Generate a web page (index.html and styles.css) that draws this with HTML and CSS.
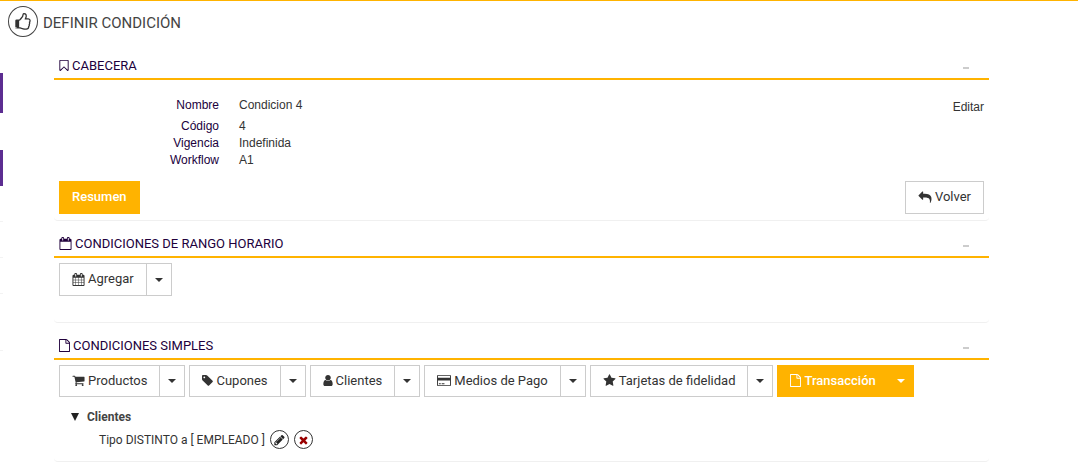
FILE: index.html
```html
<!DOCTYPE html>
<html lang="es">
<head>
<meta charset="utf-8">
<meta name="viewport" content="width=device-width, initial-scale=1">
<title>Definir condición</title>
<link rel="stylesheet" href="styles.css">
</head>
<body>
<svg class="sprite" aria-hidden="true">
  <symbol id="thumb" viewBox="0 0 1792 1792"><path d="M256 1472q0-26-19-45t-45-19-45 19-19 45 19 45 45 19 45-19 19-45zm1280-704q0-51-39-89.500t-89-38.500h-352q0-58 48-159.500t48-160.500q0-98-32-145t-128-47q-26 26-38 85t-30.500 125.500-59.500 109.500q-22 23-77 91-4 5-23 30t-31.500 41-34.500 42.500-40 44-38.500 35.500-40 27-35.500 9h-32v640h32q13 0 31.500 3t33 6.500 38 11 35 11.500 35.500 12.500 29 10.500q211 73 342 73h121q192 0 192-167 0-26-5-56 30-16 47.500-52.500t17.500-73.500-18-69q53-50 53-119 0-25-10-55.500t-25-47.500q32-1 53.500-47t21.500-81zm128-1q0 89-49 163 9 33 9 69 0 77-38 144 3 21 3 43 0 101-60 178 1 139-85 219.500t-227 80.500h-129q-96 0-189.500-22.500t-216.500-65.500q-116-40-138-40h-288q-53 0-90.500-37.500t-37.500-90.500v-640q0-53 37.500-90.500t90.500-37.500h274q36-24 137-155 58-75 107-128 24-25 35.500-85.500t30.500-126.500 62-108q39-37 90-37 84 0 151 32.500t102 101.500 35 186q0 93-48 192h176q104 0 180 76t76 179z"/></symbol>
  <symbol id="bookmark" viewBox="256 0 1280 1792"><path d="M1408 256h-1024v1242l423-406 89-85 89 85 423 406v-1242zm12-128q23 0 44 9 33 13 52.500 41t19.500 62v1289q0 34-19.500 62t-52.500 41q-19 8-44 8-48 0-83-32l-441-424-441 424q-36 33-83 33-23 0-44-9-33-13-52.500-41t-19.500-62v-1289q0-34 19.500-62t52.500-41q21-9 44-9h1048z"/></symbol>
  <symbol id="calendar-o" viewBox="64 0 1664 1792"><path d="M192 1664h1408v-1024h-1408v1024zm384-1216v-288q0-13-9.500-22.500t-22.500-9.500h-64q-13 0-22.500 9.500t-9.500 22.500v288q0 13 9.500 22.500t22.500 9.500h64q13 0 22.500-9.500t9.500-22.500zm768 0v-288q0-13-9.500-22.500t-22.500-9.500h-64q-13 0-22.500 9.500t-9.500 22.500v288q0 13 9.500 22.500t22.500 9.500h64q13 0 22.500-9.500t9.500-22.500zm384-64v1280q0 52-38 90t-90 38h-1408q-52 0-90-38t-38-90v-1280q0-52 38-90t90-38h128v-96q0-66 47-113t113-47h64q66 0 113 47t47 113v96h384v-96q0-66 47-113t113-47h64q66 0 113 47t47 113v96h128q52 0 90 38t38 90z"/></symbol>
  <symbol id="calendar" viewBox="64 0 1664 1792"><path d="M192 1664h288v-288h-288v288zm352 0h320v-288h-320v288zm-352-352h288v-320h-288v320zm352 0h320v-320h-320v320zm-352-384h288v-288h-288v288zm736 736h320v-288h-320v288zm-384-736h320v-288h-320v288zm768 736h288v-288h-288v288zm-384-352h320v-320h-320v320zm-352-864v-288q0-13-9.500-22.500t-22.500-9.500h-64q-13 0-22.500 9.500t-9.500 22.500v288q0 13 9.500 22.500t22.500 9.500h64q13 0 22.500-9.500t9.500-22.500zm736 864h288v-320h-288v320zm-384-384h320v-288h-320v288zm384 0h288v-288h-288v288zm32-480v-288q0-13-9.500-22.500t-22.500-9.500h-64q-13 0-22.500 9.500t-9.500 22.500v288q0 13 9.500 22.500t22.500 9.500h64q13 0 22.500-9.500t9.500-22.500zm384-64v1280q0 52-38 90t-90 38h-1408q-52 0-90-38t-38-90v-1280q0-52 38-90t90-38h128v-96q0-66 47-113t113-47h64q66 0 113 47t47 113v96h384v-96q0-66 47-113t113-47h64q66 0 113 47t47 113v96h128q52 0 90 38t38 90z"/></symbol>
  <symbol id="file" viewBox="128 0 1536 1792"><path d="M1596 380q28 28 48 76t20 88v1152q0 40-28 68t-68 28h-1344q-40 0-68-28t-28-68v-1600q0-40 28-68t68-28h896q40 0 88 20t76 48zm-444-244v376h376q-10-29-22-41l-313-313q-12-12-41-22zm384 1528v-1024h-416q-40 0-68-28t-28-68v-416h-768v1536h1280z"/></symbol>
  <symbol id="reply" viewBox="0 0 1792 1792"><path d="M1792 1120q0 166-127 451-3 7-10.500 24t-13.500 30-13 22q-12 17-28 17-15 0-23.500-10t-8.500-25q0-9 2.500-26.500t2.500-23.500q5-68 5-123 0-101-17.500-181t-48.500-138.500-80-101-105.500-69.500-133-42.500-154-21.500-175.500-6h-224v256q0 26-19 45t-45 19-45-19l-512-512q-19-19-19-45t19-45l512-512q19-19 45-19t45 19 19 45v256h224q713 0 875 403 53 134 53 333z"/></symbol>
  <symbol id="cart" viewBox="64 0 1664 1792"><path d="M704 1536q0 52-38 90t-90 38-90-38-38-90 38-90 90-38 90 38 38 90zm896 0q0 52-38 90t-90 38-90-38-38-90 38-90 90-38 90 38 38 90zm128-1088v512q0 24-16.500 42.500t-40.500 21.500l-1044 122q13 60 13 70 0 16-24 64h920q26 0 45 19t19 45-19 45-45 19h-1024q-26 0-45-19t-19-45q0-11 8-31.500t16-36 21.500-40 15.500-29.500l-177-823h-204q-26 0-45-19t-19-45 19-45 45-19h256q16 0 28.500 6.500t19.500 15.500 13 24.500 8 26 5.500 29.500 4.500 26h1201q26 0 45 19t19 45z"/></symbol>
  <symbol id="tag" viewBox="128 0 1536 1792"><path d="M576 448q0-53-37.500-90.500t-90.500-37.500-90.500 37.500-37.500 90.500 37.500 90.500 90.500 37.500 90.500-37.500 37.500-90.500zm1067 576q0 53-37 90l-491 492q-39 37-91 37-53 0-90-37l-715-716q-38-37-64.500-101t-26.500-117v-416q0-52 38-90t90-38h416q53 0 117 26.500t102 64.500l715 714q37 39 37 91z"/></symbol>
  <symbol id="user" viewBox="256 0 1280 1792"><path d="M1536 1399q0 109-62.500 187t-150.500 78h-854q-88 0-150.500-78t-62.500-187q0-85 8.500-160.500t31.500-152 58.500-131 94-89 134.500-34.500q131 128 313 128t313-128q76 0 134.500 34.500t94 89 58.500 131 31.500 152 8.500 160.500zm-256-887q0 159-112.500 271.500t-271.500 112.500-271.500-112.500-112.500-271.500 112.500-271.500 271.500-112.500 271.500 112.500 112.500 271.500z"/></symbol>
  <symbol id="card" viewBox="0 0 1920 1792"><path fill-rule="evenodd" d="M160 128h1600q66 0 113 47t47 113v1216q0 66-47 113t-113 47h-1600q-66 0-113-47t-47-113v-1216q0-66 47-113t113-47zm0 128q-32 0-32 32v224h1664v-224q0-32-32-32zm-32 640v608q0 32 32 32h1600q32 0 32-32v-608zm128 512v-128h256v128zm384 0v-128h384v128z"/></symbol>
  <symbol id="star" viewBox="64 0 1664 1792"><path d="M1728 647q0 22-26 48l-363 354 86 500q1 7 1 20 0 21-10.500 35.500t-30.500 14.500q-19 0-40-12l-449-236-449 236q-22 12-40 12-21 0-31.500-14.500t-10.500-35.500q0-6 2-20l86-500-364-354q-25-27-25-48 0-37 56-46l502-73 225-455q19-41 49-41t49 41l225 455 502 73q56 9 56 46z"/></symbol>
  <symbol id="pencil" viewBox="128 0 1536 1792"><path d="M491 1536l91-91-235-235-91 91v107h128v128h107zm523-928q0-22-22-22-10 0-17 7l-542 542q-7 7-7 17 0 22 22 22 10 0 17-7l542-542q7-7 7-17zm-54-192l416 416-832 832h-416v-416zm683 96q0 53-37 90l-166 166-416-416 166-165q36-38 90-38 53 0 91 38l235 234q37 39 37 91z"/></symbol>
  <symbol id="times" viewBox="192 0 1408 1792"><path d="M1490 1322q0 40-28 68l-136 136q-28 28-68 28t-68-28l-294-294-294 294q-28 28-68 28t-68-28l-136-136q-28-28-28-68t28-68l294-294-294-294q-28-28-28-68t28-68l136-136q28-28 68-28t68 28l294 294 294-294q28-28 68-28t68 28l136 136q28 28 28 68t-28 68l-294 294 294 294q28 28 28 68z"/></symbol>
  <symbol id="caret" viewBox="0 0 8 4"><path d="M0 0h8l-4 4z"/></symbol>
</svg>
<div class="page">
  <aside class="rail" aria-hidden="true">
    <div class="rail-mark"></div>
    <div class="rail-mark"></div>
    <div class="rail-item"></div>
    <div class="rail-item"></div>
    <div class="rail-item rail-item-tall"></div>
    <div class="rail-item"></div>
  </aside>
  <main class="content">
    <header class="title">
      <span class="title-icon"><svg class="icon icon-title"><use href="#thumb"/></svg></span>
      <h1 class="title-text">DEFINIR CONDICIÓN</h1>
    </header>
    <div class="panels">
      <section class="panel">
        <div class="panel-head">
          <h2 class="panel-title"><svg class="icon icon-slim"><use href="#bookmark"/></svg>CABECERA</h2>
          <button class="collapse" type="button" aria-label="Contraer cabecera"></button>
        </div>
        <div class="panel-body">
          <div class="summary">
            <dl class="fields">
              <dt class="first">Nombre</dt><dd class="first">Condicion 4</dd>
              <dt>Código</dt><dd>4</dd>
              <dt>Vigencia</dt><dd>Indefinida</dd>
              <dt>Workflow</dt><dd>A1</dd>
            </dl>
            <a class="edit" href="#editar">Editar</a>
          </div>
          <div class="actions">
            <button class="btn primary" type="button">Resumen</button>
            <button class="btn" type="button"><svg class="icon icon-wide"><use href="#reply"/></svg>Volver</button>
          </div>
        </div>
      </section>
      <section class="panel">
        <div class="panel-head">
          <h2 class="panel-title"><svg class="icon"><use href="#calendar-o"/></svg>CONDICIONES DE RANGO HORARIO</h2>
          <button class="collapse" type="button" aria-label="Contraer condiciones de rango horario"></button>
        </div>
        <div class="panel-body panel-body-roomy">
          <div class="toolbar">
            <div class="group"><button class="btn" type="button"><svg class="icon"><use href="#calendar"/></svg>Agregar</button><button class="btn toggle" type="button" aria-label="Más opciones de agregar"><svg class="caret"><use href="#caret"/></svg></button></div>
          </div>
        </div>
      </section>
      <section class="panel">
        <div class="panel-head">
          <h2 class="panel-title"><svg class="icon icon-mid"><use href="#file"/></svg>CONDICIONES SIMPLES</h2>
          <button class="collapse" type="button" aria-label="Contraer condiciones simples"></button>
        </div>
        <div class="panel-body">
          <div class="toolbar toolbar-compact">
            <div class="group"><button class="btn" type="button"><svg class="icon"><use href="#cart"/></svg>Productos</button><button class="btn toggle" type="button" aria-label="Más opciones de productos"><svg class="caret"><use href="#caret"/></svg></button></div>
            <div class="group"><button class="btn" type="button"><svg class="icon icon-mid"><use href="#tag"/></svg>Cupones</button><button class="btn toggle" type="button" aria-label="Más opciones de cupones"><svg class="caret"><use href="#caret"/></svg></button></div>
            <div class="group"><button class="btn" type="button"><svg class="icon icon-slim"><use href="#user"/></svg>Clientes</button><button class="btn toggle" type="button" aria-label="Más opciones de clientes"><svg class="caret"><use href="#caret"/></svg></button></div>
            <div class="group"><button class="btn" type="button"><svg class="icon icon-wide"><use href="#card"/></svg>Medios de Pago</button><button class="btn toggle" type="button" aria-label="Más opciones de medios de pago"><svg class="caret"><use href="#caret"/></svg></button></div>
            <div class="group"><button class="btn" type="button"><svg class="icon"><use href="#star"/></svg>Tarjetas de fidelidad</button><button class="btn toggle" type="button" aria-label="Más opciones de tarjetas de fidelidad"><svg class="caret"><use href="#caret"/></svg></button></div>
            <div class="group"><button class="btn primary" type="button"><svg class="icon icon-mid"><use href="#file"/></svg>Transacción</button><button class="btn primary toggle" type="button" aria-label="Más opciones de transacción"><svg class="caret"><use href="#caret"/></svg></button></div>
          </div>
          <details class="tree" open>
            <summary class="tree-head"><svg class="tree-arrow" viewBox="0 0 8 8"><path d="M0 0h8l-4 8z"/></svg>Clientes</summary>
            <div class="tree-row">
              <span>Tipo DISTINTO a [ EMPLEADO ]</span>
              <button class="round" type="button" aria-label="Editar condición"><svg class="icon icon-round"><use href="#pencil"/></svg></button>
              <button class="round round-delete" type="button" aria-label="Eliminar condición"><svg class="icon icon-round"><use href="#times"/></svg></button>
            </div>
          </details>
        </div>
      </section>
    </div>
  </main>
</div>
</body>
</html>
```
FILE: styles.css
```css
* { box-sizing: border-box; }

body {
  margin: 0;
  background: #fff;
  color: #333;
  font: 13px/18px Roboto, "Open Sans", sans-serif;
}

.sprite { display: none; }

.page {
  display: flex;
  border-top: 1px solid #ffb300;
}

/* Edge of the side menu */
.rail {
  width: 3px;
  flex: none;
  padding-top: 72px;
}
.rail-mark {
  height: 40px;
  background: #5c2d91;
}
.rail-mark + .rail-mark {
  height: 36px;
  margin-top: 37px;
  margin-bottom: 35px;
}
.rail-item {
  height: 36px;
  border-top: 1px solid #f3f3f3;
}
.rail-item-tall { height: 57px; }

.content {
  flex: 1;
  min-width: 0;
}

.title {
  display: flex;
  align-items: center;
  gap: 5px;
  padding: 5px 5px 6px;
}
.title-icon {
  display: grid;
  place-items: center;
  width: 30px;
  height: 31px;
  border: 1px solid #444;
  border-radius: 50%;
}
.title-text {
  margin: 0;
  padding-top: 2px;
  font-size: 15px;
  font-weight: 400;
  color: #444;
}

.panels { padding: 0 89px 0 51px; }

.panel {
  border-bottom: 1px solid #f0f0f0;
  border-radius: 4px;
}
.panel-head {
  display: flex;
  align-items: center;
  justify-content: space-between;
  height: 37px;
  padding: 10px 20px 0 5px;
  border-bottom: 2px solid #ffb300;
}
.panel-title {
  display: flex;
  align-items: center;
  gap: 3px;
  margin: 0;
  font-size: 13px;
  font-weight: 400;
  color: #20003c;
}
.collapse {
  width: 6px;
  height: 6px;
  padding: 0;
  border: 0;
  border-bottom: 2px solid #ccc;
  background: none;
}
.panel-body { padding: 5px 5px 6px; }
.panel-body-roomy { padding-bottom: 26px; }

.icon {
  flex: none;
  width: 13px;
  height: 13px;
  fill: currentColor;
}
.icon-mid { width: 11px; }
.icon-slim { width: 10px; }
.icon-wide { width: 14px; }
.icon-title { width: 18px; height: 18px; }
.icon-round { width: 11px; height: 12px; }

.summary {
  display: flex;
  justify-content: space-between;
  align-items: flex-start;
  padding-top: 12px;
  font: 12px/17px "Liberation Sans", Arial, sans-serif;
}
.fields {
  display: grid;
  grid-template-columns: 160px auto;
  column-gap: 20px;
  margin: 0;
}
.fields dt {
  text-align: right;
  color: #20003c;
}
.fields dd { margin: 0; }
.fields .first { padding-bottom: 4px; }
.edit {
  padding-top: 2px;
  color: #333;
  text-decoration: none;
}

.actions {
  display: flex;
  justify-content: space-between;
  padding-top: 12px;
}
.toolbar {
  display: flex;
  flex-wrap: wrap;
  gap: 4px;
}
.group { display: flex; }

.btn {
  display: inline-flex;
  align-items: center;
  justify-content: center;
  gap: 3px;
  height: 33px;
  padding: 0 12px 1px;
  border: 1px solid #ccc;
  background: #fff;
  color: #333;
  font: inherit;
  white-space: nowrap;
}
.primary {
  border-color: #ffb300;
  background: #ffb300;
  color: #fff;
  font-weight: 500;
}
.toggle {
  width: 26px;
  margin-left: -1px;
  padding: 0;
}
.toolbar-compact .btn { height: 32px; }
.caret {
  width: 8px;
  height: 4px;
  fill: currentColor;
}

.tree { padding: 11px 12px 6px; }
.tree-head {
  display: flex;
  align-items: center;
  gap: 8px;
  font-size: 12px;
  font-weight: 700;
  color: #444;
  list-style: none;
}
.tree-arrow {
  width: 8px;
  height: 8px;
  fill: #222;
}
.tree-row {
  display: flex;
  align-items: center;
  gap: 5px;
  padding: 4px 0 0 28px;
  font-size: 12px;
}
.round {
  display: grid;
  place-items: center;
  width: 19px;
  height: 19px;
  padding: 0;
  border: 1px solid #333;
  border-radius: 50%;
  background: #fff;
  color: #222;
}
.round-delete { color: #900; }
```
